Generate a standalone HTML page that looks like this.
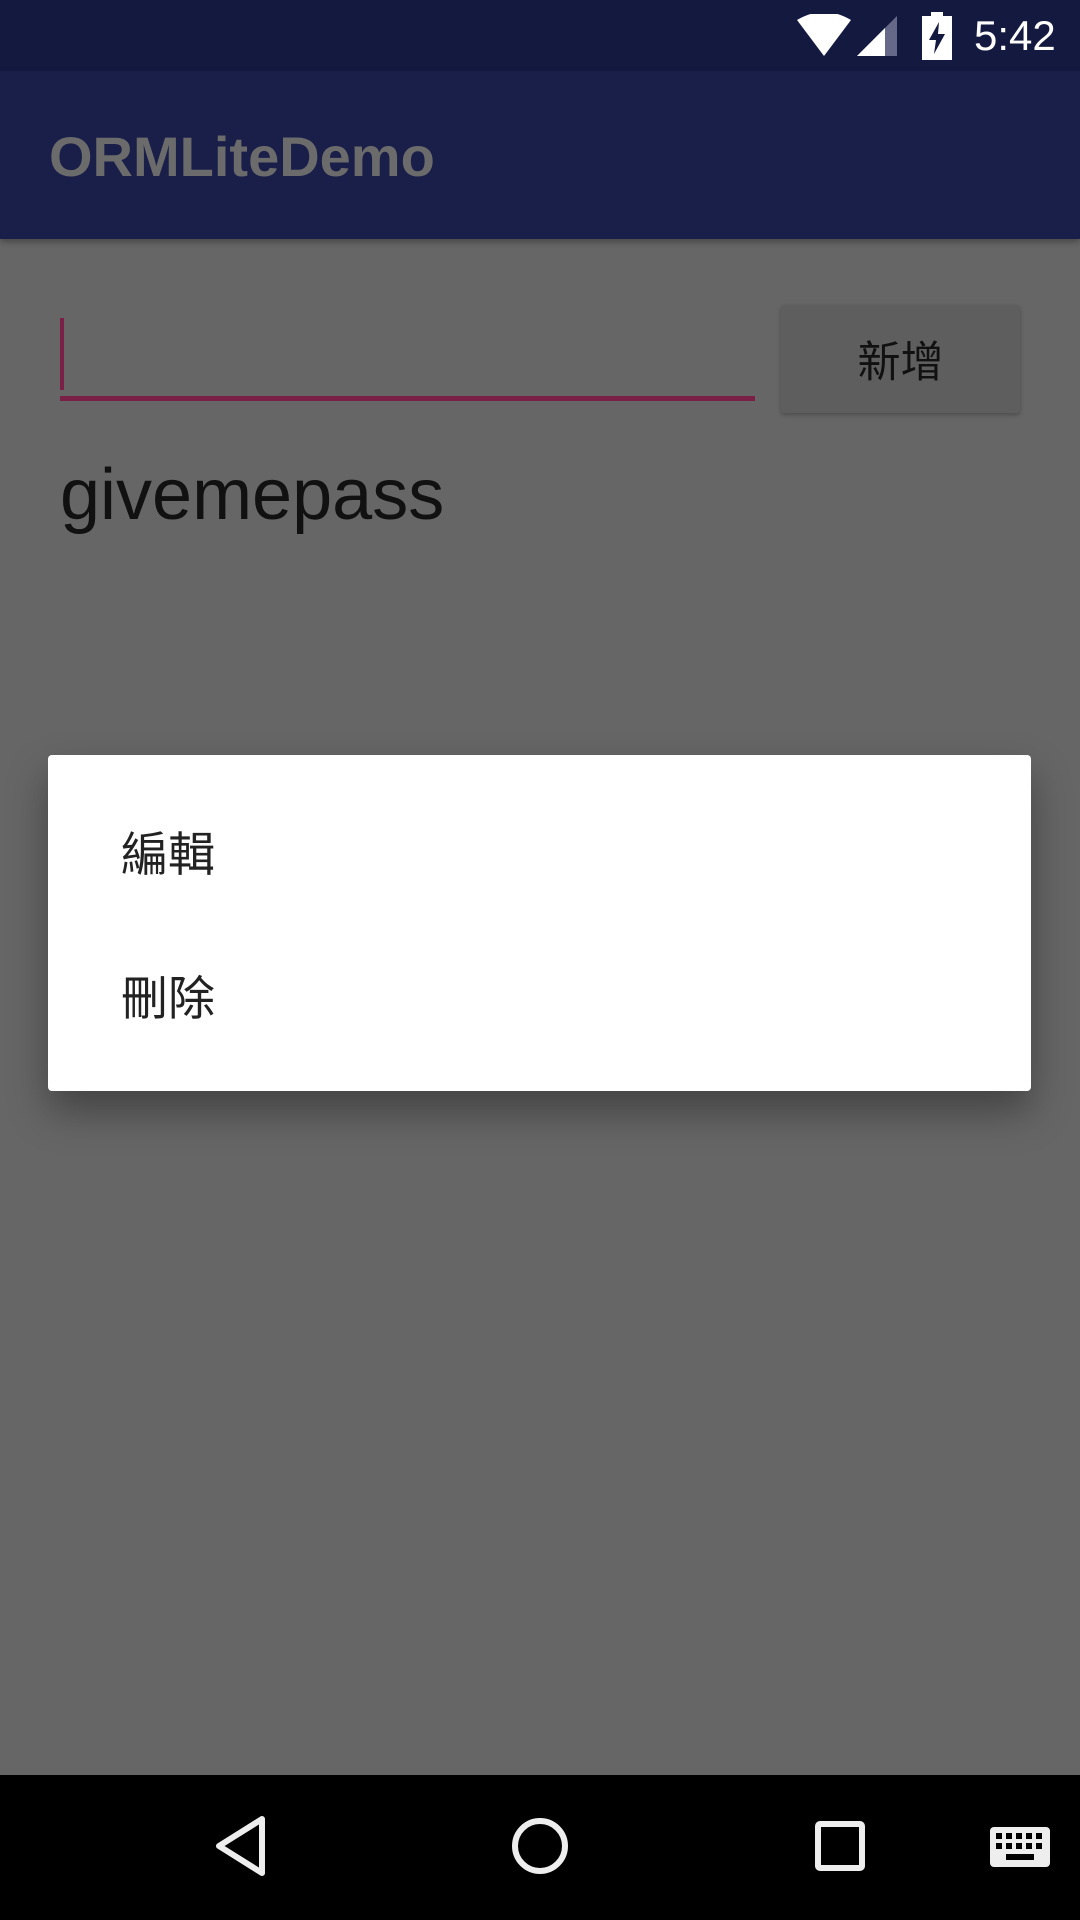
<!DOCTYPE html>
<html><head><meta charset="utf-8"><style>
body{margin:0;width:1080px;height:1920px;position:relative;overflow:hidden;background:#666;font-family:"Liberation Sans","Noto Sans CJK TC",sans-serif}
.a{position:absolute}
</style></head><body>
<div class="a" style="left:0;top:0;width:1080px;height:71px;background:#141940"></div>
<div class="a" style="left:0;top:71px;width:1080px;height:168px;background:#1a1f4a;box-shadow:0 3px 6px rgba(0,0,0,.3)"></div>
<div class="a" style="left:49px;top:124px;font-size:56px;color:#6b6b6b;font-weight:bold;letter-spacing:0px">ORMLiteDemo</div>
<svg class="a" style="left:797px;top:14px" width="100" height="44" viewBox="0 0 100 44">
<path d="M0 6 Q27 -10 54 6 L27 42 Z" fill="#fff"/>
<path d="M60 42 L102 0 L102 42 Z" fill="#666a88"/>
<path d="M60 42 L88 14 L88 42 Z" fill="#fff"/>
</svg>
<svg class="a" style="left:922px;top:12px" width="30" height="48" viewBox="0 0 30 48">
<rect x="9" y="0" width="12" height="5" fill="#fff"/><rect x="0" y="4" width="30" height="44" fill="#fff"/>
<path d="M17 10 L7 28 L14 28 L12 42 L23 22 L16 22 Z" fill="#141940"/>
</svg>
<div class="a" style="left:974px;top:12px;font-size:42px;color:#fff">5:42</div>
<div class="a" style="left:60px;top:318px;width:4px;height:72px;background:#7a1f45"></div>
<div class="a" style="left:60px;top:396px;width:695px;height:5px;background:#7a1f45"></div>
<div class="a" style="left:781px;top:305px;width:239px;height:108px;background:#5e5e5e;box-shadow:0 2px 4px rgba(0,0,0,.25);border-radius:3px"></div>
<div class="a" style="left:781px;top:328px;width:239px;text-align:center;font-size:43px;color:#111">新增</div>
<div class="a" style="left:60px;top:454px;font-size:72px;color:#111">givemepass</div>
<div class="a" style="left:48px;top:755px;width:983px;height:336px;background:#fff;border-radius:4px;box-shadow:0 20px 40px rgba(0,0,0,.35)"></div>
<div class="a" style="left:121px;top:816px;font-size:47px;color:#222">編輯</div>
<div class="a" style="left:121px;top:960px;font-size:47px;color:#222">刪除</div>
<div class="a" style="left:0;top:1775px;width:1080px;height:145px;background:#000"></div>
<svg class="a" style="left:0;top:1775px" width="1080" height="145">
<path d="M262 44 L219 71 L262 98 Z" fill="none" stroke="#eee" stroke-width="6" stroke-linejoin="round"/>
<circle cx="540" cy="71" r="25" fill="none" stroke="#eee" stroke-width="6"/>
<rect x="818" y="49" width="44" height="44" fill="none" stroke="#eee" stroke-width="6" rx="2"/>
<rect x="990" y="52" width="60" height="40" rx="4" fill="#eee"/>
<g fill="#000"><rect x="996" y="58" width="6" height="6"/><rect x="1006" y="58" width="6" height="6"/><rect x="1016" y="58" width="6" height="6"/><rect x="1026" y="58" width="6" height="6"/><rect x="1036" y="58" width="6" height="6"/>
<rect x="996" y="68" width="6" height="6"/><rect x="1006" y="68" width="6" height="6"/><rect x="1016" y="68" width="6" height="6"/><rect x="1026" y="68" width="6" height="6"/><rect x="1036" y="68" width="6" height="6"/>
<rect x="1006" y="79" width="28" height="6"/></g>
</svg>
</body></html>
